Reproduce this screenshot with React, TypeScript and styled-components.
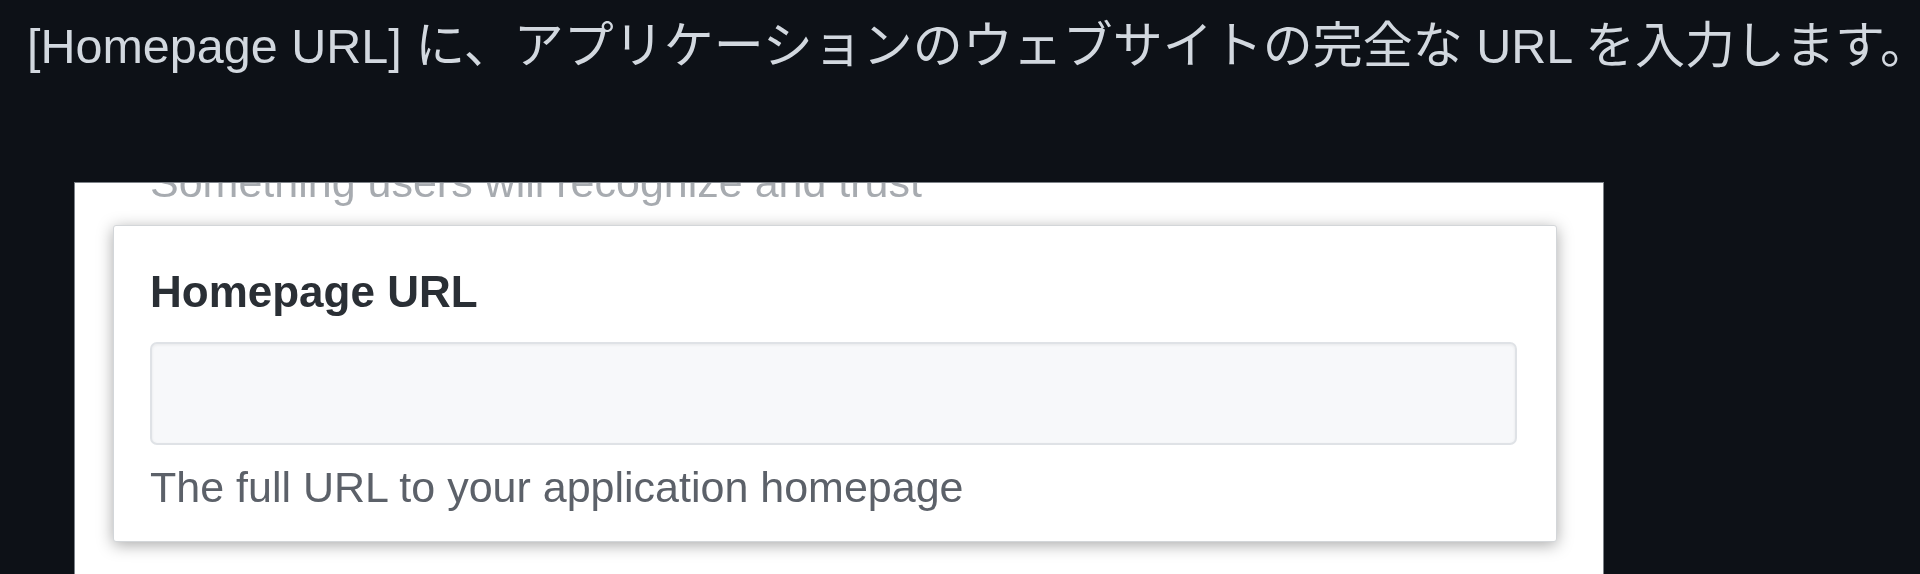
import React from "react";
import styled, { createGlobalStyle } from "styled-components";

const GlobalStyle = createGlobalStyle`
  html, body {
    margin: 0;
    padding: 0;
    background-color: #0d1117;
    overflow: hidden;
  }
`;

const Page = styled.div`
  height: 574px;
  padding: 16px 0 0 27px;
  box-sizing: border-box;
`;

const Heading = styled.p`
  margin: 0;
  width: max-content;
  font-family: "Liberation Sans", "Noto Sans CJK JP", sans-serif;
  font-size: 50px;
  line-height: 60px;
  color: #d2d8df;
  white-space: nowrap;
`;

const Latin = styled.span`
  font-size: 48.5px;
`;

const Shot = styled.div`
  margin: 106px 0 0 47px;
  width: 1530px;
  height: 392px;
  box-sizing: border-box;
  background-color: #ffffff;
  border: 1px solid #7d8288;
  border-bottom: none;
  overflow: hidden;
  padding-left: 38px;
  font-family: "Liberation Sans", Arial, sans-serif;
  filter: blur(0.6px);
`;

const GhostText = styled.div`
  margin: -26px 0 0 37px;
  font-size: 43px;
  line-height: 50px;
  color: #a7abb0;
  white-space: nowrap;
`;

const Card = styled.div`
  margin-top: 18px;
  width: 1444px;
  box-sizing: border-box;
  padding: 41px 39px 29px 36px;
  background-color: #ffffff;
  border: 1px solid #d3d6d9;
  border-radius: 3px;
  box-shadow: 0 3px 16px rgba(0, 0, 0, 0.34);
`;

const Label = styled.label`
  display: block;
  font-size: 44px;
  line-height: 50px;
  font-weight: 700;
  color: #2a2f35;
`;

const Field = styled.input`
  display: block;
  margin-top: 25px;
  width: 100%;
  height: 103px;
  box-sizing: border-box;
  background-color: #f7f8fa;
  border: 2px solid #dfe2e6;
  border-radius: 7px;
  box-shadow: inset 0 1px 3px rgba(27, 31, 35, 0.07);
  outline: none;
`;

const Help = styled.p`
  margin: 17px 0 0;
  font-size: 43px;
  line-height: 50px;
  color: #5c6169;
`;

const App = () => {
  return (
    <Page>
      <GlobalStyle />
      <Heading>
        <Latin>[Homepage URL] </Latin>に、アプリケーションのウェブサイトの完全な
        <Latin> URL </Latin>を入力します。
      </Heading>
      <Shot>
        <GhostText>Something users will recognize and trust</GhostText>
        <Card>
          <Label>Homepage URL</Label>
          <Field type="text" readOnly />
          <Help>The full URL to your application homepage</Help>
        </Card>
      </Shot>
    </Page>
  );
};

export default App;
